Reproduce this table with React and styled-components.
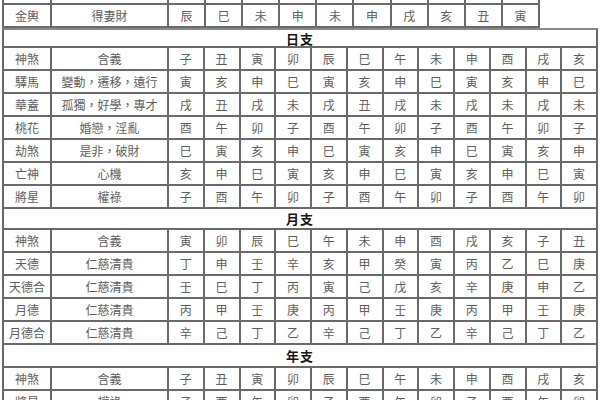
import React from 'react'
import styled, { createGlobalStyle } from 'styled-components'

const GlobalStyle = createGlobalStyle`
  html, body {
    margin: 0;
    padding: 0;
    background: #fff;
  }
  body {
    width: 600px;
    height: 400px;
    overflow: hidden;
    font-family: "Noto Sans CJK TC", "Noto Sans CJK SC", sans-serif;
  }
`

const LINE = '2px solid #6a6a6a'

const Sheet = styled.div`
  margin: -18px 0 0 2px;
  width: 598px;
`

const Row = styled.div`
  display: grid;
  grid-template-columns: 48px 117px repeat(${(p) => p.$cols}, 1fr);
  width: ${(p) => p.$width}px;
  height: ${(p) => p.$h || 23}px;
  border-left: ${LINE};
  box-sizing: border-box;
`

const Cell = styled.div`
  display: flex;
  align-items: center;
  justify-content: center;
  border-right: ${LINE};
  border-bottom: ${LINE};
  box-sizing: border-box;
  font-size: 12px;
  color: #5e5e5e;
  white-space: nowrap;
  overflow: hidden;
`

const Band = styled.div`
  width: 596px;
  height: ${(p) => p.$h || 20}px;
  box-sizing: border-box;
  border-left: ${LINE};
  border-right: ${LINE};
  border-bottom: ${LINE};
  border-top: ${(p) => (p.$first ? '2px solid #8a8a8a' : 'none')};
  display: flex;
  align-items: center;
  justify-content: center;
  font-size: 13px;
  font-weight: 700;
  color: #161616;
  letter-spacing: 1px;
`

const topRows = [
  ['', '', '          '],
  ['金輿', '得妻財', '辰巳未申未申戌亥丑寅'],
]

const sections = [
  {
    title: '日支',
    rows: [
      ['神煞', '含義', '子丑寅卯辰巳午未申酉戌亥'],
      ['驛馬', '變動，遷移，遠行', '寅亥申巳寅亥申巳寅亥申巳'],
      ['華蓋', '孤獨，好學，專才', '戌丑戌未戌丑戌未戌未戌未'],
      ['桃花', '婚戀，淫亂', '酉午卯子酉午卯子酉午卯子'],
      ['劫煞', '是非，破財', '巳寅亥申巳寅亥申巳寅亥申'],
      ['亡神', '心機', '亥申巳寅亥申巳寅亥申巳寅'],
      ['將星', '權祿', '子酉午卯子酉午卯子酉午卯'],
    ],
  },
  {
    title: '月支',
    h: 21,
    rows: [
      ['神煞', '含義', '寅卯辰巳午未申酉戌亥子丑'],
      ['天德', '仁慈清貴', '丁申壬辛亥甲癸寅丙乙巳庚'],
      ['天德合', '仁慈清貴', '壬巳丁丙寅己戊亥辛庚申乙'],
      ['月德', '仁慈清貴', '丙甲壬庚丙甲壬庚丙甲壬庚'],
      ['月德合', '仁慈清貴', '辛己丁乙辛己丁乙辛己丁乙'],
    ],
  },
  {
    title: '年支',
    h: 23,
    rows: [
      ['神煞', '含義', '子丑寅卯辰巳午未申酉戌亥'],
      ['將星', '權祿', '子酉午卯子酉午卯子酉午卯'],
    ],
  },
]

function DataRow({ row, cols, width }) {
  const [name, meaning, values] = row
  return (
    <Row $cols={cols} $width={width}>
      <Cell>{name}</Cell>
      <Cell>{meaning}</Cell>
      {values.split('').map((v, i) => (
        <Cell key={i}>{v.trim()}</Cell>
      ))}
    </Row>
  )
}

export default function App() {
  return (
    <>
      <GlobalStyle />
      <Sheet>
        {topRows.map((row, i) => (
          <DataRow key={i} row={row} cols={10} width={538} />
        ))}
        {sections.map((section, idx) => (
          <React.Fragment key={section.title}>
            <Band $first={idx === 0} $h={section.h}>
              {section.title}
            </Band>
            {section.rows.map((row) => (
              <DataRow key={row[0]} row={row} cols={12} width={596} />
            ))}
          </React.Fragment>
        ))}
      </Sheet>
    </>
  )
}
